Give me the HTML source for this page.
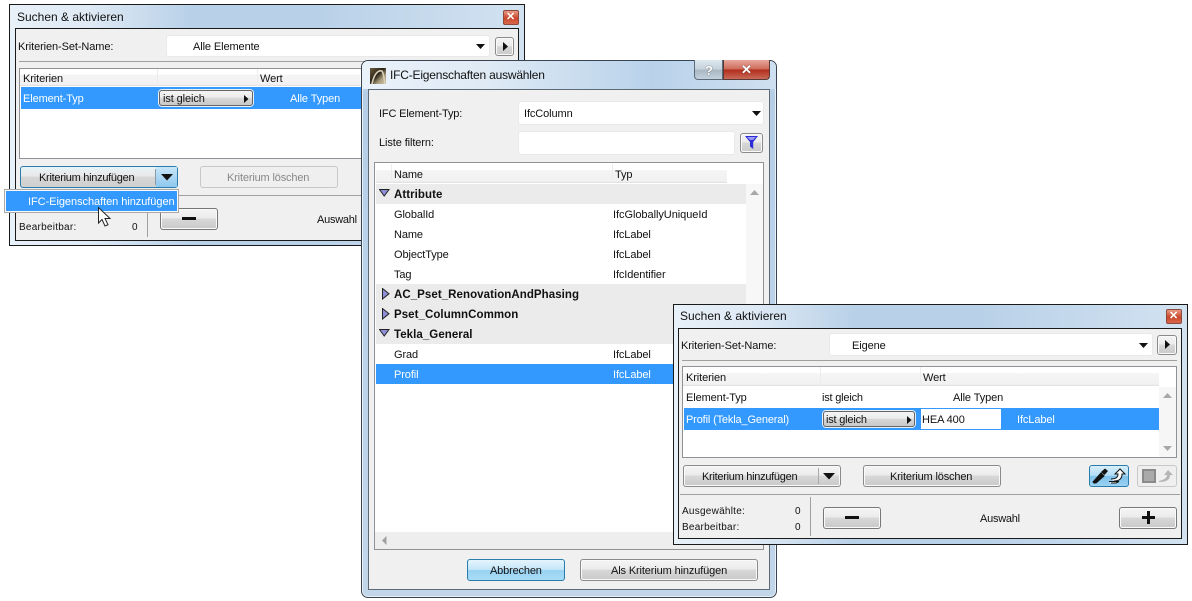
<!DOCTYPE html>
<html><head><meta charset="utf-8"><style>
html,body{margin:0;padding:0;background:#fff}
#p{position:relative;width:1192px;height:601px;overflow:hidden;background:#fff;font:11px/14px "Liberation Sans",sans-serif;color:#111}
#p div,#p span,#p svg{position:absolute;box-sizing:border-box}
.t{white-space:nowrap;margin-top:1px;letter-spacing:-.1px}
.ti{font-size:12px;letter-spacing:0;margin-top:0}
.btn{letter-spacing:-.28px}
.btn2{letter-spacing:-.16px}
.sm{font-size:10px;letter-spacing:.25px;margin-top:2px}
.o{background:linear-gradient(90deg,#e8f0f8 0,#dfeaf5 15%,#b9d1e8 35%,#b9d1e8 60%,#d2e2f1 100%);border:1px solid #1a1a1a}
.in{background:#f0f0f0;border:1px solid #1a1a1a}
.dd{background:#fff;border-radius:2px;box-shadow:0 0 0 1px #e9e9e9}
.b{border:1px solid #8a8a8a;border-radius:3px;background:linear-gradient(#f4f4f4 0,#ececec 45%,#d8d8d8 50%,#c9c9c9 100%);text-align:center;box-shadow:inset 0 0 0 1px #fafafa}
.bd{border-color:#c8c8c8;background:#efefef;color:#888;box-shadow:none}
.bb{border:1px solid #2a7cab;border-radius:3px;background:linear-gradient(#e6f5fd 0,#c4e6f9 48%,#98d2f2 52%,#a8dcf6 100%);text-align:center}
.fr{border:1px solid #8f9296;background:#fff}
.h{background:linear-gradient(#fff 0,#fff 30%,#f4f4f4 35%,#f2f2f2 90%,#dcdcdc 100%)}
.sel{background:#3399ff;color:#fff}
.ln{background:#a0a0a0}
.g{background:#ebebeb}
.sp{width:1px;background:#ececec}
.n{font-weight:bold;font-size:11.5px;letter-spacing:.06px;color:#111}
</style></head><body><div id="p">

<!-- Dialog 1 -->
<div class="o" style="left:9px;top:4px;width:516px;height:242px"></div>
<span class="t ti" style="left:17px;top:10px">Suchen &amp; aktivieren</span>
<div style="left:503px;top:10px;width:16px;height:15px;border:1px solid #8d4a3c;border-radius:2px;background:linear-gradient(#e89a84,#c9472c 55%,#d8674a)"></div>
<span class="t" style="left:506px;top:9px;color:#fff;font:bold 11px/15px 'Liberation Sans',sans-serif">✕</span>
<div class="in" style="left:15px;top:28px;width:504px;height:213px"></div>
<span class="t" style="left:18px;top:39px">Kriterien-Set-Name:</span>
<div class="dd" style="left:167px;top:36px;width:322px;height:20px"></div>
<span class="t" style="left:193px;top:39px">Alle Elemente</span>
<svg style="left:476px;top:44px" width="10" height="6"><path d="M0 0H9L4.5 5Z" fill="#111"/></svg>
<div class="b" style="left:495px;top:37px;width:19px;height:19px"></div>
<svg style="left:503px;top:42px" width="6" height="9"><path d="M0 0L5 4.5L0 9Z" fill="#111"/></svg>
<div class="ln" style="left:19px;top:61px;width:497px;height:1px"></div>
<div class="fr" style="left:19px;top:68px;width:497px;height:91px"></div>
<div class="h" style="left:20px;top:69px;width:340px;height:17px"></div>
<div class="sp" style="left:157px;top:69px;height:17px"></div>
<div class="sp" style="left:257px;top:69px;height:17px"></div>
<span class="t" style="left:23px;top:71px">Kriterien</span>
<span class="t" style="left:260px;top:71px">Wert</span>
<div class="sel" style="left:21px;top:87px;width:345px;height:22px"></div>
<span class="t" style="left:23px;top:91px;color:#fff">Element-Typ</span>
<div class="b" style="left:159px;top:90px;width:94px;height:16px;border:1px solid #666;box-shadow:0 0 0 1px #e8f0f8"></div>
<span class="t" style="left:163px;top:91px">ist gleich</span>
<svg style="left:244px;top:95px" width="5" height="8"><path d="M0 0L4.5 4L0 8Z" fill="#111"/></svg>
<span class="t" style="left:290px;top:91px;color:#fff">Alle Typen</span>
<div class="bb" style="left:20px;top:166px;width:158px;height:22px;background:linear-gradient(#e8f3f9 0,#e8e8e8 45%,#d6d6d6 52%,#cfcfcf 100%)"></div>
<div style="left:155px;top:169px;width:1px;height:16px;background:#8a9aa4"></div>
<div style="left:156px;top:167px;width:21px;height:20px;background:linear-gradient(#c8e6f8,#8ec8ee)"></div>
<svg style="left:161px;top:174px" width="13" height="7"><path d="M0 0H12L6 6.5Z" fill="#111"/></svg>
<span class="t btn" style="left:39px;top:170px">Kriterium hinzufügen</span>
<div class="b bd" style="left:200px;top:166px;width:138px;height:22px"></div>
<span class="t btn2" style="left:227px;top:170px;color:#888">Kriterium löschen</span>
<div class="ln" style="left:17px;top:195px;width:345px;height:1px"></div>
<div class="ln" style="left:147px;top:196px;width:1px;height:41px"></div>
<span class="t sm" style="left:19px;top:219px">Bearbeitbar:</span>
<span class="t sm" style="left:132px;top:219px">0</span>
<div class="b" style="left:160px;top:208px;width:58px;height:22px;border-color:#777"></div>
<div style="left:182px;top:217px;width:14px;height:3px;background:#111"></div>
<span class="t" style="left:317px;top:212px;letter-spacing:-.25px">Auswahl</span>
<!-- popup -->
<div style="left:4px;top:189px;width:175px;height:24px;background:#fafafa;border:1px solid #a8a8a8"></div>
<div class="sel" style="left:6px;top:191px;width:171px;height:20px"></div>
<span class="t" style="left:28px;top:194px;color:#fff;letter-spacing:-.05px">IFC-Eigenschaften hinzufügen</span>
<svg style="left:97px;top:206px" width="15" height="22"><path d="M1.5 1.5V17L5 13.5L8 20L11 18.7L8 12.5H13Z" fill="#fff" stroke="#222" stroke-width="1"/></svg>

<!-- Dialog 2 -->
<div style="left:361px;top:60px;width:416px;height:538px;border:1px solid #3a4450;border-radius:7px;background:linear-gradient(180deg,#dceaf6 0,#cfe1f1 3%,#b5cee6 6%,#b9d1ea 30%,#c2d6ea 100%);box-shadow:inset 0 0 0 1px #e8f0f8"></div>
<div style="left:362px;top:61px;width:414px;height:28px;border-radius:6px 6px 0 0;background:linear-gradient(90deg,#eaf2fa 0,#dfeaf5 30%,#b9d2ea 70%,#cfe0f0 100%)"></div>
<div style="left:370px;top:68px;width:16px;height:16px;background:linear-gradient(135deg,#6d5c3e,#2a2418 45%,#a99a7a 70%,#cfc7b0)"></div>
<svg style="left:370px;top:68px" width="16" height="16"><path d="M2 16C4 6 8 2 12 3C14 6 14 12 15 16" fill="none" stroke="#d8d0b8" stroke-width="1.6"/></svg>
<span class="t ti" style="left:390px;top:68px;letter-spacing:-.2px">IFC-Eigenschaften auswählen</span>
<div style="left:694px;top:60px;width:29px;height:20px;border:1px solid #5a6a7a;border-top:none;border-radius:0 0 0 4px;background:linear-gradient(#dde8f0,#c4d0da 50%,#a8b6c2 52%,#c4d2dc)"></div>
<span class="t" style="left:705px;top:62px;font:bold 13px/15px 'Liberation Sans',sans-serif;color:#fff;text-shadow:0 0 1px #222">?</span>
<div style="left:723px;top:60px;width:47px;height:20px;border:1px solid #5a3a38;border-top:none;border-radius:0 0 4px 0;background:linear-gradient(#e6a89c,#cf6a5a 48%,#b32c1c 52%,#c86a58)"></div>
<span class="t" style="left:741px;top:61px;font:bold 13px/16px 'Liberation Sans',sans-serif;color:#fff;text-shadow:0 0 1px #333">✕</span>
<div style="left:368px;top:89px;width:402px;height:501px;background:#f0f0f0;border:1px solid #5c6a76"></div>
<span class="t" style="left:379px;top:106px;letter-spacing:-.15px">IFC Element-Typ:</span>
<div class="dd" style="left:519px;top:102px;width:244px;height:22px"></div>
<span class="t" style="left:524px;top:106px">IfcColumn</span>
<svg style="left:752px;top:111px" width="10" height="6"><path d="M0 0H9L4.5 5Z" fill="#111"/></svg>
<span class="t" style="left:379px;top:135px">Liste filtern:</span>
<div class="dd" style="left:519px;top:132px;width:215px;height:22px"></div>
<div class="b" style="left:740px;top:133px;width:23px;height:20px"></div>
<svg style="left:745px;top:136px" width="14" height="14"><path d="M0 0H13L8.2 6V13L5 10.5V6Z" fill="#2b2bd8"/><path d="M2 1H11L8 4H5Z" fill="#9a9af5"/></svg>
<div class="fr" style="left:374px;top:162px;width:390px;height:388px"></div>
<div class="h" style="left:376px;top:164px;width:351px;height:19px"></div>
<div class="sp" style="left:391px;top:164px;height:19px"></div>
<div class="sp" style="left:612px;top:164px;height:19px"></div>
<span class="t" style="left:394px;top:167px">Name</span>
<span class="t" style="left:615px;top:167px">Typ</span>
<div class="g" style="left:376px;top:184px;width:370px;height:20px"></div>
<div class="g" style="left:376px;top:284px;width:370px;height:60px"></div>
<div class="sel" style="left:376px;top:364px;width:370px;height:20px"></div>
<svg style="left:379px;top:189px" width="11" height="10"><path d="M.5 .5H10L5.2 7Z" fill="#8f8fd8" stroke="#222"/></svg>
<svg style="left:382px;top:288px" width="8" height="12"><path d="M.5 .5V11L7 5.7Z" fill="#8f8fd8" stroke="#222"/></svg>
<svg style="left:382px;top:308px" width="8" height="12"><path d="M.5 .5V11L7 5.7Z" fill="#8f8fd8" stroke="#222"/></svg>
<svg style="left:379px;top:329px" width="11" height="10"><path d="M.5 .5H10L5.2 7Z" fill="#8f8fd8" stroke="#222"/></svg>
<span class="t n" style="left:394px;top:187px">Attribute</span>
<span class="t n" style="left:394px;top:287px">AC_Pset_RenovationAndPhasing</span>
<span class="t n" style="left:394px;top:307px">Pset_ColumnCommon</span>
<span class="t n" style="left:394px;top:327px">Tekla_General</span>
<span class="t" style="left:394px;top:207px">GlobalId</span>
<span class="t" style="left:394px;top:227px">Name</span>
<span class="t" style="left:394px;top:247px">ObjectType</span>
<span class="t" style="left:394px;top:267px">Tag</span>
<span class="t" style="left:394px;top:347px">Grad</span>
<span class="t" style="left:394px;top:367px;color:#fff">Profil</span>
<span class="t" style="left:613px;top:207px;letter-spacing:-.05px">IfcGloballyUniqueId</span>
<span class="t" style="left:613px;top:227px">IfcLabel</span>
<span class="t" style="left:613px;top:247px">IfcLabel</span>
<span class="t" style="left:613px;top:267px">IfcIdentifier</span>
<span class="t" style="left:613px;top:347px">IfcLabel</span>
<span class="t" style="left:613px;top:367px;color:#fff">IfcLabel</span>
<div style="left:746px;top:184px;width:17px;height:348px;background:#f7f7f7"></div>
<svg style="left:750px;top:190px" width="9" height="5"><path d="M0 5L4.5 0L9 5Z" fill="#a8a8a8"/></svg>
<div style="left:375px;top:532px;width:388px;height:17px;background:#eeeeee"></div>
<svg style="left:382px;top:536px" width="5" height="9"><path d="M4.5 0L0 4.5L4.5 9Z" fill="#a0a0a0"/></svg>
<div class="bb" style="left:467px;top:559px;width:98px;height:22px"></div>
<span class="t btn2" style="left:490px;top:563px">Abbrechen</span>
<div class="b" style="left:580px;top:559px;width:178px;height:22px"></div>
<span class="t" style="left:611px;top:563px;letter-spacing:-.13px">Als Kriterium hinzufügen</span>

<!-- Dialog 3 -->
<div class="o" style="left:673px;top:304px;width:515px;height:241px"></div>
<span class="t ti" style="left:680px;top:309px">Suchen &amp; aktivieren</span>
<div style="left:1166px;top:309px;width:16px;height:15px;border:1px solid #8d4a3c;border-radius:2px;background:linear-gradient(#e89a84,#c9472c 55%,#d8674a)"></div>
<span class="t" style="left:1169px;top:308px;color:#fff;font:bold 11px/15px 'Liberation Sans',sans-serif">✕</span>
<div class="in" style="left:678px;top:328px;width:504px;height:211px"></div>
<span class="t" style="left:681px;top:338px">Kriterien-Set-Name:</span>
<div class="dd" style="left:830px;top:334px;width:322px;height:21px"></div>
<span class="t" style="left:852px;top:338px">Eigene</span>
<svg style="left:1139px;top:343px" width="10" height="6"><path d="M0 0H9L4.5 5Z" fill="#111"/></svg>
<div class="b" style="left:1157px;top:335px;width:20px;height:20px"></div>
<svg style="left:1165px;top:340px" width="6" height="9"><path d="M0 0L5 4.5L0 9Z" fill="#111"/></svg>
<div class="ln" style="left:682px;top:360px;width:495px;height:1px"></div>
<div class="fr" style="left:682px;top:366px;width:495px;height:92px"></div>
<div class="h" style="left:683px;top:367px;width:476px;height:19px"></div>
<div class="sp" style="left:820px;top:367px;height:19px"></div>
<div class="sp" style="left:920px;top:367px;height:19px"></div>
<span class="t" style="left:686px;top:370px">Kriterien</span>
<span class="t" style="left:923px;top:370px">Wert</span>
<span class="t" style="left:686px;top:390px">Element-Typ</span>
<span class="t" style="left:822px;top:390px;letter-spacing:-.2px">ist gleich</span>
<span class="t" style="left:953px;top:390px">Alle Typen</span>
<div class="sel" style="left:684px;top:408px;width:475px;height:22px"></div>
<span class="t" style="left:686px;top:412px;color:#fff;letter-spacing:-.15px">Profil (Tekla_General)</span>
<div class="b" style="left:823px;top:411px;width:92px;height:16px;border:1px solid #666;box-shadow:0 0 0 1px #e8f0f8"></div>
<span class="t" style="left:826px;top:412px;letter-spacing:-.2px">ist gleich</span>
<svg style="left:907px;top:416px" width="5" height="8"><path d="M0 0L4.5 4L0 8Z" fill="#111"/></svg>
<div style="left:921px;top:409px;width:80px;height:20px;background:#fff"></div>
<span class="t" style="left:922px;top:412px">HEA 400</span>
<span class="t" style="left:1017px;top:412px;color:#fff">IfcLabel</span>
<div style="left:1159px;top:387px;width:17px;height:70px;background:#f6f6f6"></div>
<svg style="left:1163px;top:393px" width="9" height="5"><path d="M0 5L4.5 0L9 5Z" fill="#a8a8a8"/></svg>
<svg style="left:1163px;top:446px" width="9" height="5"><path d="M0 0L4.5 5L9 0Z" fill="#a8a8a8"/></svg>
<div class="b" style="left:683px;top:465px;width:158px;height:22px"></div>
<div style="left:818px;top:468px;width:1px;height:16px;background:#aaa"></div>
<svg style="left:823px;top:473px" width="13" height="7"><path d="M0 0H12L6 6.5Z" fill="#111"/></svg>
<span class="t btn" style="left:702px;top:469px">Kriterium hinzufügen</span>
<div class="b" style="left:863px;top:465px;width:138px;height:22px"></div>
<span class="t btn2" style="left:890px;top:469px">Kriterium löschen</span>
<div class="bb" style="left:1089px;top:465px;width:40px;height:22px;background:linear-gradient(#d9effb,#b0dcf5 48%,#7fc0ea 52%,#9ad2f2)"></div>
<svg style="left:1091px;top:467px" width="36" height="18"><path d="M3 16L2 15L10 6L13 9L5 16Z" fill="#111" stroke="#111"/><path d="M10 5L14 1.5L17 4L13.5 8Z" fill="#111"/><path d="M18 14.5H28L25 16H20" fill="#fff" stroke="#111"/><path d="M20 12C24 12 27 11 27 7H24L29 2L34 7H31C31 12 28 14 23 14" fill="#fff" stroke="#111"/></svg>
<div class="b bd" style="left:1137px;top:465px;width:40px;height:22px"></div>
<svg style="left:1140px;top:467px" width="34" height="18"><path d="M3 3H15V15H3Z" fill="#aaa" stroke="#8a8a8a" stroke-width="2"/><path d="M19 14C22 13 27 12 27 8H24L28 3L33 8H30C30 13 26 15 19 15Z" fill="#b5b5b5"/></svg>
<div class="ln" style="left:680px;top:494px;width:500px;height:1px"></div>
<div class="ln" style="left:810px;top:497px;width:1px;height:39px"></div>
<span class="t sm" style="left:682px;top:503px">Ausgewählte:</span>
<span class="t sm" style="left:795px;top:503px">0</span>
<span class="t sm" style="left:682px;top:519px">Bearbeitbar:</span>
<span class="t sm" style="left:795px;top:519px">0</span>
<div class="b" style="left:823px;top:507px;width:58px;height:22px;border-color:#777"></div>
<div style="left:845px;top:516px;width:14px;height:3px;background:#111"></div>
<span class="t" style="left:980px;top:511px;letter-spacing:-.25px">Auswahl</span>
<div class="b" style="left:1119px;top:507px;width:58px;height:22px;border-color:#777"></div>
<div style="left:1142px;top:516px;width:13px;height:3px;background:#111"></div>
<div style="left:1147px;top:511px;width:3px;height:13px;background:#111"></div>
</div></body></html>
